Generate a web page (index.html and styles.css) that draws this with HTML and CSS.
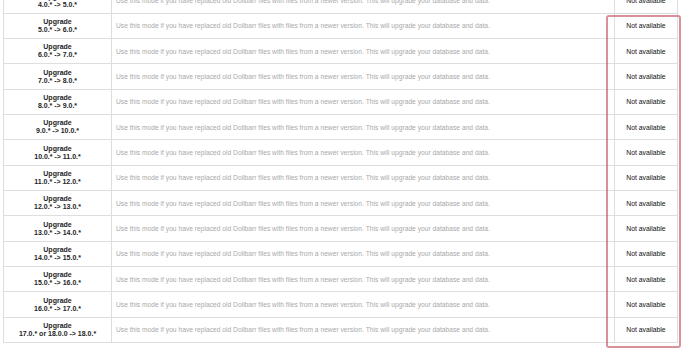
FILE: index.html
```html
<!DOCTYPE html>
<html>
<head>
<meta charset="utf-8">
<link rel="stylesheet" href="styles.css">
</head>
<body>
<div class="page">
<table class="upgrades">
<colgroup><col class="c1"><col class="c2"><col class="c3"></colgroup>
<tbody>
<tr><td class="ver"><b>Upgrade</b><br>4.0.* -&gt; 5.0.*</td><td class="desc">Use this mode if you have replaced old Dolibarr files with files from a newer version. This will upgrade your database and data.</td><td class="state">Not available</td></tr>
<tr><td class="ver"><b>Upgrade</b><br>5.0.* -&gt; 6.0.*</td><td class="desc">Use this mode if you have replaced old Dolibarr files with files from a newer version. This will upgrade your database and data.</td><td class="state">Not available</td></tr>
<tr><td class="ver"><b>Upgrade</b><br>6.0.* -&gt; 7.0.*</td><td class="desc">Use this mode if you have replaced old Dolibarr files with files from a newer version. This will upgrade your database and data.</td><td class="state">Not available</td></tr>
<tr><td class="ver"><b>Upgrade</b><br>7.0.* -&gt; 8.0.*</td><td class="desc">Use this mode if you have replaced old Dolibarr files with files from a newer version. This will upgrade your database and data.</td><td class="state">Not available</td></tr>
<tr><td class="ver"><b>Upgrade</b><br>8.0.* -&gt; 9.0.*</td><td class="desc">Use this mode if you have replaced old Dolibarr files with files from a newer version. This will upgrade your database and data.</td><td class="state">Not available</td></tr>
<tr><td class="ver"><b>Upgrade</b><br>9.0.* -&gt; 10.0.*</td><td class="desc">Use this mode if you have replaced old Dolibarr files with files from a newer version. This will upgrade your database and data.</td><td class="state">Not available</td></tr>
<tr><td class="ver"><b>Upgrade</b><br>10.0.* -&gt; 11.0.*</td><td class="desc">Use this mode if you have replaced old Dolibarr files with files from a newer version. This will upgrade your database and data.</td><td class="state">Not available</td></tr>
<tr><td class="ver"><b>Upgrade</b><br>11.0.* -&gt; 12.0.*</td><td class="desc">Use this mode if you have replaced old Dolibarr files with files from a newer version. This will upgrade your database and data.</td><td class="state">Not available</td></tr>
<tr><td class="ver"><b>Upgrade</b><br>12.0.* -&gt; 13.0.*</td><td class="desc">Use this mode if you have replaced old Dolibarr files with files from a newer version. This will upgrade your database and data.</td><td class="state">Not available</td></tr>
<tr><td class="ver"><b>Upgrade</b><br>13.0.* -&gt; 14.0.*</td><td class="desc">Use this mode if you have replaced old Dolibarr files with files from a newer version. This will upgrade your database and data.</td><td class="state">Not available</td></tr>
<tr><td class="ver"><b>Upgrade</b><br>14.0.* -&gt; 15.0.*</td><td class="desc">Use this mode if you have replaced old Dolibarr files with files from a newer version. This will upgrade your database and data.</td><td class="state">Not available</td></tr>
<tr><td class="ver"><b>Upgrade</b><br>15.0.* -&gt; 16.0.*</td><td class="desc">Use this mode if you have replaced old Dolibarr files with files from a newer version. This will upgrade your database and data.</td><td class="state">Not available</td></tr>
<tr><td class="ver"><b>Upgrade</b><br>16.0.* -&gt; 17.0.*</td><td class="desc">Use this mode if you have replaced old Dolibarr files with files from a newer version. This will upgrade your database and data.</td><td class="state">Not available</td></tr>
<tr><td class="ver"><b>Upgrade</b><br>17.0.* or 18.0.0 -&gt; 18.0.*</td><td class="desc">Use this mode if you have replaced old Dolibarr files with files from a newer version. This will upgrade your database and data.</td><td class="state">Not available</td></tr>
</tbody>
</table>
<div class="highlight"></div>
</div>
</body>
</html>
```

FILE: styles.css
```css
html, body {
  margin: 0;
  padding: 0;
  background: #ffffff;
}
.page {
  position: relative;
  width: 690px;
  height: 356px;
  overflow: hidden;
}
.upgrades {
  margin-top: -12.6px;
  margin-left: 3px;
  width: 674px;
  border-collapse: collapse;
  table-layout: fixed;
  font-family: "Liberation Sans", Arial, sans-serif;
}
.c1 { width: 108px; }
.c2 { width: 503px; }
.c3 { width: 63px; }
.upgrades td {
  height: 25.33px;
  padding: 0 4px;
  border: 1px solid #dedede;
  vertical-align: middle;
  box-sizing: border-box;
}
.ver {
  text-align: center;
  font-weight: bold;
  font-size: 7px;
  line-height: 8px;
  color: #1e1e1e;
}
.ver b { font-weight: bold; }
.desc {
  font-size: 6.7px;
  color: #a9a9a9;
  white-space: nowrap;
  overflow: hidden;
}
.state {
  text-align: center;
  font-size: 6.8px;
  color: #111111;
  white-space: nowrap;
}
.highlight {
  position: absolute;
  left: 606px;
  top: 15px;
  width: 75px;
  height: 333px;
  box-sizing: border-box;
  border: 2px solid rgba(188, 72, 84, 0.6);
  border-radius: 3px;
}
```
